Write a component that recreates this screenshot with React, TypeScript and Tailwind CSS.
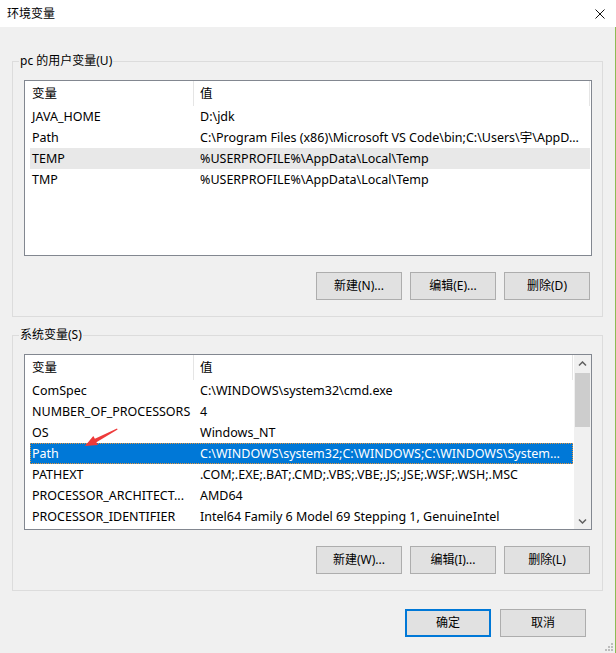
import React from 'react';

type Row = { name: string; value: string; state?: 'hover' | 'selected' };

const userVars: Row[] = [
  { name: 'JAVA_HOME', value: 'D:\\jdk' },
  { name: 'Path', value: 'C:\\Program Files (x86)\\Microsoft VS Code\\bin;C:\\Users\\宇\\AppD...' },
  { name: 'TEMP', value: '%USERPROFILE%\\AppData\\Local\\Temp', state: 'hover' },
  { name: 'TMP', value: '%USERPROFILE%\\AppData\\Local\\Temp' },
];

const systemVars: Row[] = [
  { name: 'ComSpec', value: 'C:\\WINDOWS\\system32\\cmd.exe' },
  { name: 'NUMBER_OF_PROCESSORS', value: '4' },
  { name: 'OS', value: 'Windows_NT' },
  { name: 'Path', value: 'C:\\WINDOWS\\system32;C:\\WINDOWS;C:\\WINDOWS\\System...', state: 'selected' },
  { name: 'PATHEXT', value: '.COM;.EXE;.BAT;.CMD;.VBS;.VBE;.JS;.JSE;.WSF;.WSH;.MSC' },
  { name: 'PROCESSOR_ARCHITECT...', value: 'AMD64' },
  { name: 'PROCESSOR_IDENTIFIER', value: 'Intel64 Family 6 Model 69 Stepping 1, GenuineIntel' },
];

const Button = ({ label, primary }: { label: string; primary?: boolean }) => (
  <button
    className={`h-[28px] w-[86px] bg-[#e1e1e1] text-[12px] leading-[16px] text-black ${
      primary ? 'border-2 border-[#0078d7]' : 'border border-[#adadad]'
    }`}
  >
    {label}
  </button>
);

const Chevron = ({ down }: { down?: boolean }) => (
  <svg width="9" height="6" viewBox="0 0 9 6" className="block">
    <path
      d={down ? 'M1 1.5 L4.5 5 L8 1.5' : 'M1 4.5 L4.5 1 L8 4.5'}
      fill="none"
      stroke="#606060"
      strokeWidth="1.5"
    />
  </svg>
);

const ScrollBar = () => (
  <div className="w-[17px] h-full bg-[#f0f0f0] flex flex-col items-center">
    <div className="h-[17px] w-full flex items-center justify-center">
      <Chevron />
    </div>
    <div className="mt-[1px] h-[54px] w-[15px] bg-[#cdcdcd]" />
    <div className="flex-1" />
    <div className="h-[17px] w-full flex items-center justify-center">
      <Chevron down />
    </div>
  </div>
);

const ListView = ({ rows, scroll }: { rows: Row[]; scroll?: boolean }) => (
  <div className="h-[176px] border border-[#828790] bg-white flex text-[12.5px]">
    <div className="flex-1 min-w-0 pl-[5px] pr-[1px]">
      <div className="h-[25px] flex">
        <div className="w-[164px] flex items-center pl-[2px] border-r border-[#e5e5e5]">变量</div>
        <div className="flex-1 flex items-center pl-[6px] border-r border-[#e5e5e5]">值</div>
      </div>
      {rows.map((r) => (
        <div
          key={r.name}
          className={`h-[21px] flex items-center border ${
            r.state === 'selected'
              ? 'bg-[#0078d7] text-white border-dotted border-[#e8953a]'
              : r.state === 'hover'
                ? 'bg-[#e8e8e8] border-transparent'
                : 'border-transparent'
          }`}
        >
          <div className="w-[163px] pl-[1px] pr-[4px] whitespace-nowrap overflow-hidden">{r.name}</div>
          <div className="flex-1 min-w-0 pl-[6px] whitespace-nowrap overflow-hidden">{r.value}</div>
        </div>
      ))}
    </div>
    {scroll && <ScrollBar />}
  </div>
);

const Group = ({
  title,
  rows,
  scroll,
  buttons,
  className,
}: {
  title: string;
  rows: Row[];
  scroll?: boolean;
  buttons: string[];
  className?: string;
}) => (
  <fieldset className={`border border-[#dcdcdc] pl-[6px] pr-[10px] pb-[16px] ${className ?? ''}`}>
    <legend className="px-[1px] leading-[16px]">{title}</legend>
    <div className="pl-[5px] pt-[11px]">
      <ListView rows={rows} scroll={scroll} />
      <div className="flex justify-end gap-[8px] pr-[2px] mt-[16px]">
        {buttons.map((b) => (
          <Button key={b} label={b} />
        ))}
      </div>
    </div>
  </fieldset>
);

export default function App() {
  return (
    <div className="relative w-[616px] h-[653px] bg-[#f0f0f0] text-[12px] leading-[16px] text-black font-['Noto_Sans','Noto_Sans_CJK_SC',sans-serif] overflow-hidden">
      {/* title bar */}
      <div className="h-[27px] bg-white flex items-center justify-between pl-[7px] pr-[11px]">
        <span>环境变量</span>
        <svg width="10" height="10" viewBox="0 0 10 10">
          <path d="M0.5 0.5 L9.5 9.5 M9.5 0.5 L0.5 9.5" stroke="#111" strokeWidth="1" fill="none" />
        </svg>
      </div>

      <div className="h-[626px] border-r border-[#8dbb55] px-[12px] pt-[26px]">
        <Group title="pc 的用户变量(U)" rows={userVars} buttons={['新建(N)...', '编辑(E)...', '删除(D)']} />
        <Group
          className="mt-[10px]"
          title="系统变量(S)"
          rows={systemVars}
          scroll
          buttons={['新建(W)...', '编辑(I)...', '删除(L)']}
        />
        <div className="mt-[18px] flex justify-end gap-[9px] pr-[17px]">
          <Button label="确定" primary />
          <Button label="取消" />
        </div>
      </div>

      {/* red annotation arrow */}
      <svg className="absolute left-0 top-0 pointer-events-none" width="616" height="653" viewBox="0 0 616 653">
        <polygon
          points="85,446 93.3,436 94.9,438.8 117,428.4 117.6,429.6 96.4,442.2 98,445"
          fill="#ee3a3a"
        />
      </svg>

      {/* resize grip */}
      <svg className="absolute right-[2px] bottom-[1px]" width="10" height="10" viewBox="0 0 10 10">
        <rect x="7" y="1" width="2" height="2" fill="#bdbdbd" />
        <rect x="4" y="4" width="2" height="2" fill="#bdbdbd" />
        <rect x="7" y="4" width="2" height="2" fill="#bdbdbd" />
        <rect x="1" y="7" width="2" height="2" fill="#bdbdbd" />
        <rect x="4" y="7" width="2" height="2" fill="#bdbdbd" />
        <rect x="7" y="7" width="2" height="2" fill="#bdbdbd" />
      </svg>
    </div>
  );
}
